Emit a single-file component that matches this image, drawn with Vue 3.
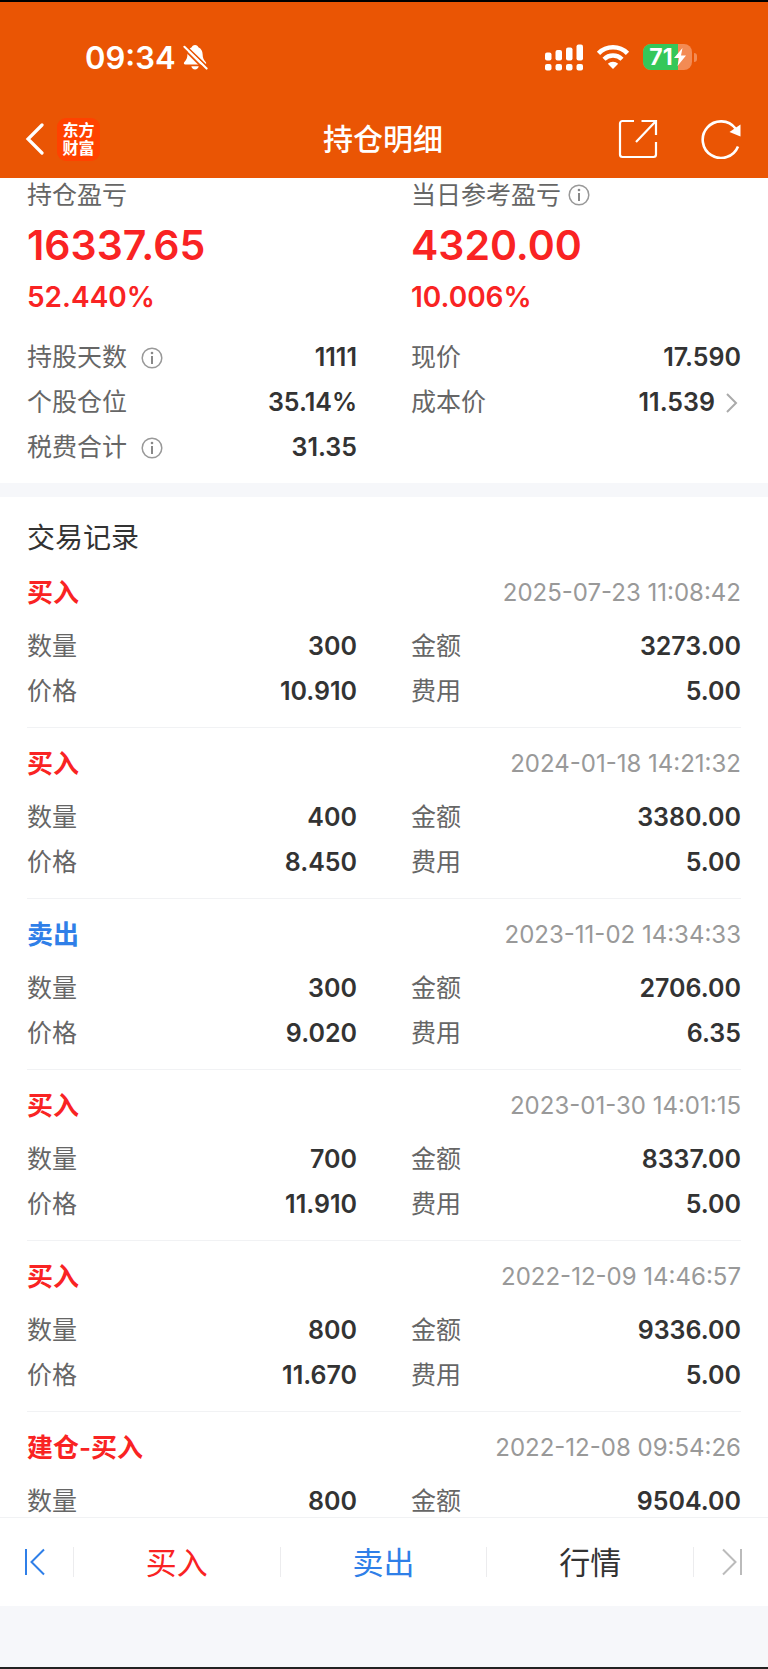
<template>
  <div class="app">
    <header class="header">
      <div class="status-bar">
        <div class="status-left">
          <span class="time">09:34</span>
          <svg class="bell" viewBox="0 0 27 28" width="25" height="26">
            <path fill="#fff" d="M13 1c-2 0-3.300 1.200-3.600 2.500C6 5 5 7.800 4.800 11c-.2 4-.8 5.600-3.300 8.300-1 1.100-.6 2.700 1 2.700h21c1.600 0 2-1.600 1-2.700-2.500-2.700-3.100-4.300-3.300-8.300-.2-3.200-1.200-6-4.600-7.500C16.300 2.200 15 1 13 1zM9 24h8c-.3 2-2 3.500-4 3.500S9.300 26 9 24z" />
            <path d="M0 4.500 24 28.500" stroke="#ea5504" stroke-width="2" />
            <path d="M3 2 28 26" stroke="#ea5504" stroke-width="2" />
            <path d="M1.500 3 25.500 26.500" stroke="#fff" stroke-width="2.200" stroke-linecap="round" />
          </svg>
        </div>
        <div class="status-right">
          <svg viewBox="0 0 38 27" width="38" height="27" fill="#fff">
            <rect x="0" y="8.500" width="6.500" height="8" rx="2" />
            <rect x="10.500" y="6" width="6.500" height="10.500" rx="2" />
            <rect x="21" y="3.500" width="6.500" height="13" rx="2" />
            <rect x="31.500" y="0.500" width="6.500" height="16" rx="2" />
            <rect x="0" y="20" width="6.500" height="6.500" rx="2" />
            <rect x="10.500" y="20" width="6.500" height="6.500" rx="2" />
            <rect x="21" y="20" width="6.500" height="6.500" rx="2" />
            <rect x="31.500" y="20" width="6.500" height="6.500" rx="2" />
          </svg>
          <svg viewBox="0 0 34 26" width="34" height="26">
            <path d="M2.500 9.300a20.500 20.500 0 0 1 29 0" fill="none" stroke="#fff" stroke-width="4.600" />
            <path d="M8 15.200a12.800 12.800 0 0 1 18 0" fill="none" stroke="#fff" stroke-width="4.400" />
            <path d="M17 25l-5.200-5.200a7.400 7.400 0 0 1 10.400 0z" fill="#fff" />
          </svg>
          <div class="battery">
            <div class="battery-body">
              <div class="battery-level" :style="{ width: battery + '%' }"></div>
              <div class="battery-text">
                <span>{{ battery }}</span>
                <svg viewBox="0 0 12 18" width="12" height="18">
                  <path d="M8.500 0 0 10h5L3.500 18 12 7.500H7z" fill="#fff" />
                </svg>
              </div>
            </div>
            <div class="battery-cap"></div>
          </div>
        </div>
      </div>
      <nav class="nav">
        <div class="nav-left">
          <button class="icon-btn" type="button" aria-label="返回">
            <svg viewBox="0 0 20 32" width="20" height="32">
              <path d="M17 2 3 16l14 14" fill="none" stroke="#fff" stroke-width="3.200" stroke-linecap="round" />
            </svg>
          </button>
          <div class="logo"><span>东方</span><span>财富</span></div>
        </div>
        <h1 class="nav-title">持仓明细</h1>
        <div class="nav-right">
          <button class="icon-btn" type="button" aria-label="分享">
            <svg viewBox="0 0 40 40" width="40" height="40" fill="none" stroke="#fff" stroke-width="2.200">
              <path d="M16 2H4.500A2.500 2.500 0 0 0 2 4.500v31A2.500 2.500 0 0 0 4.500 38h31a2.500 2.500 0 0 0 2.500-2.500V23" />
              <path d="M23.500 2H38v14M38 2 18 23" />
            </svg>
          </button>
          <button class="icon-btn" type="button" aria-label="刷新">
            <svg viewBox="0 0 40 40" width="40" height="40">
              <path d="M37 27.500A18.300 18.300 0 1 1 34.500 9.500" fill="none" stroke="#fff" stroke-width="2.600" />
              <path d="M39.500 5.500v12L28.500 13z" fill="#fff" />
            </svg>
          </button>
        </div>
      </nav>
    </header>

    <main class="content">
      <section class="summary">
        <div class="columns">
          <div v-for="item in profits" :key="item.label">
            <div class="label profit-label">
              {{ item.label }}
              <svg v-if="item.info" class="info" viewBox="0 0 22 22" width="22" height="22">
                <circle cx="11" cy="11" r="9.800" fill="none" stroke="#999" stroke-width="1.500" />
                <circle cx="11" cy="6" r="1.300" fill="#888" />
                <path d="M11 9v8" stroke="#888" stroke-width="2" />
              </svg>
            </div>
            <div class="profit-amount">{{ item.amount }}</div>
            <div class="profit-percent">{{ item.percent }}</div>
          </div>
        </div>
        <div class="columns stats">
          <div v-for="(column, i) in stats" :key="i">
            <div v-for="item in column" :key="item.label" class="row">
              <span class="label stat-label">
                {{ item.label }}
                <svg v-if="item.info" class="info" viewBox="0 0 22 22" width="22" height="22">
                  <circle cx="11" cy="11" r="9.800" fill="none" stroke="#999" stroke-width="1.500" />
                  <circle cx="11" cy="6" r="1.300" fill="#888" />
                  <path d="M11 9v8" stroke="#888" stroke-width="2" />
                </svg>
              </span>
              <button v-if="item.link" class="value link" type="button">
                {{ item.value }}
                <svg viewBox="0 0 16 20" width="16" height="20">
                  <path d="M2 1 11 10 2 19" fill="none" stroke="#aaa" stroke-width="2" />
                </svg>
              </button>
              <span v-else class="value">{{ item.value }}</span>
            </div>
          </div>
        </div>
      </section>

      <section class="records">
        <h2 class="records-title">交易记录</h2>
        <article v-for="record in records" :key="record.time" class="record">
          <div class="record-head">
            <h3 class="record-type" :class="record.side">{{ record.type }}</h3>
            <time class="record-time">{{ record.time }}</time>
          </div>
          <div class="columns record-fields">
            <div v-for="field in record.fields" :key="field[0]" class="row">
              <span class="label">{{ field[0] }}</span>
              <span class="value">{{ field[1] }}</span>
            </div>
          </div>
        </article>
      </section>
    </main>

    <footer class="footer">
      <div class="tabs">
        <button class="tab-side" type="button" aria-label="上一个">
          <svg viewBox="0 0 20 28" width="20" height="28" fill="none" stroke="#2f7fe8" stroke-width="2">
            <path d="M1 1v26M19 1.500 6.500 14 19 26.500" />
          </svg>
        </button>
        <button class="tab buy" type="button">买入</button>
        <button class="tab sell" type="button">卖出</button>
        <button class="tab" type="button">行情</button>
        <button class="tab-side tab-next" type="button" aria-label="下一个">
          <svg viewBox="0 0 20 28" width="20" height="28" fill="none" stroke="#bbb" stroke-width="2">
            <path d="M19 1v26M1 1.500 13.500 14 1 26.500" />
          </svg>
        </button>
      </div>
    </footer>
  </div>
</template>

<script setup>
import { ref } from 'vue';

const battery = ref(71);

const profits = ref([
  { label: '持仓盈亏', amount: '16337.65', percent: '52.440%' },
  { label: '当日参考盈亏', amount: '4320.00', percent: '10.006%', info: true }
]);

const stats = ref([
  [
    { label: '持股天数', value: '1111', info: true },
    { label: '个股仓位', value: '35.14%' },
    { label: '税费合计', value: '31.35', info: true }
  ],
  [
    { label: '现价', value: '17.590' },
    { label: '成本价', value: '11.539', link: true }
  ]
]);

const records = ref([
  {
    type: '买入', side: 'buy', time: '2025-07-23 11:08:42',
    fields: [['数量', '300'], ['金额', '3273.00'], ['价格', '10.910'], ['费用', '5.00']]
  },
  {
    type: '买入', side: 'buy', time: '2024-01-18 14:21:32',
    fields: [['数量', '400'], ['金额', '3380.00'], ['价格', '8.450'], ['费用', '5.00']]
  },
  {
    type: '卖出', side: 'sell', time: '2023-11-02 14:34:33',
    fields: [['数量', '300'], ['金额', '2706.00'], ['价格', '9.020'], ['费用', '6.35']]
  },
  {
    type: '买入', side: 'buy', time: '2023-01-30 14:01:15',
    fields: [['数量', '700'], ['金额', '8337.00'], ['价格', '11.910'], ['费用', '5.00']]
  },
  {
    type: '买入', side: 'buy', time: '2022-12-09 14:46:57',
    fields: [['数量', '800'], ['金额', '9336.00'], ['价格', '11.670'], ['费用', '5.00']]
  },
  {
    type: '建仓-买入', side: 'buy', time: '2022-12-08 09:54:26',
    fields: [['数量', '800'], ['金额', '9504.00']]
  }
]);
</script>

<style>
body {
  margin: 0;
  background: #fff;
}
</style>

<style scoped>
.app {
  display: flex;
  flex-direction: column;
  height: 100vh;
  box-sizing: border-box;
  border-top: 2px solid #000;
  border-bottom: 2px solid #222;
  font-family: Inter, "Noto Sans CJK SC", sans-serif;
  line-height: 1;
  color: #333;
}
h1, h2, h3 {
  margin: 0;
  font-weight: 400;
}
button {
  padding: 0;
  border: 0;
  background: none;
  font-family: inherit;
  line-height: inherit;
  color: inherit;
  cursor: pointer;
}
svg {
  display: block;
  flex: none;
}

/* header */
.header {
  flex: none;
  padding-bottom: 12px;
  background: #ea5504;
  color: #fff;
}
.status-bar {
  display: flex;
  align-items: center;
  justify-content: space-between;
  height: 110px;
  padding: 0 71px 0 85px;
}
.status-left {
  display: flex;
  align-items: center;
  gap: 7px;
}
.time {
  font-size: 31px;
  font-weight: 600;
}
.status-right {
  display: flex;
  align-items: center;
  gap: 13px;
}
.battery {
  display: flex;
  align-items: center;
  gap: 2px;
}
.battery-body {
  position: relative;
  width: 49px;
  height: 26px;
  border-radius: 8px;
  overflow: hidden;
  background: #f38b54;
}
.battery-level {
  height: 100%;
  background: #34c759;
}
.battery-text {
  position: absolute;
  inset: 0;
  display: flex;
  align-items: center;
  justify-content: center;
  gap: 1px;
  font-size: 23px;
  font-weight: 700;
}
.battery-cap {
  width: 3px;
  height: 9px;
  border-radius: 0 3px 3px 0;
  background: #f38b54;
}
.nav {
  display: grid;
  grid-template-columns: 1fr auto 1fr;
  align-items: center;
  height: 54px;
  padding: 0 27px 0 25px;
}
.nav-left {
  display: flex;
  align-items: center;
  gap: 12px;
}
.logo {
  display: flex;
  flex-direction: column;
  align-items: center;
  justify-content: center;
  width: 43px;
  height: 43px;
  border-radius: 9px;
  background: #ff4200;
  font-size: 16px;
  font-weight: 700;
  line-height: 18px;
}
.nav-title {
  font-size: 30px;
  font-weight: 500;
}
.nav-right {
  display: flex;
  justify-content: flex-end;
  gap: 43px;
}

/* content */
.content {
  flex: 1;
  min-height: 0;
  overflow: hidden;
}
.columns {
  display: grid;
  grid-template-columns: 1fr 1fr;
  column-gap: 54px;
}
.row {
  display: flex;
  align-items: center;
  justify-content: space-between;
  height: 45px;
}
.label {
  font-size: 25px;
  color: #666;
}
.value {
  font-size: 25px;
  font-weight: 600;
  color: #333;
}
.link {
  display: flex;
  align-items: center;
  gap: 10px;
}
.summary {
  padding: 0 27px 13px;
  border-bottom: 14px solid #f6f7fa;
}
.profit-label {
  display: flex;
  align-items: center;
  gap: 7px;
  height: 34px;
}
.profit-amount {
  font-size: 41px;
  font-weight: 600;
  line-height: 66px;
  color: #f92323;
}
.profit-percent {
  font-size: 28px;
  font-weight: 600;
  line-height: 38px;
  color: #f92323;
}
.stats {
  margin-top: 19px;
}
.stat-label {
  display: flex;
  align-items: center;
  gap: 14px;
}

/* records */
.records {
  padding: 0 27px;
}
.records-title {
  padding-top: 22px;
  font-size: 28px;
  line-height: 38px;
}
.record {
  padding: 12px 0 13px;
  border-bottom: 1px solid #f1f2f4;
}
.record-head {
  display: flex;
  align-items: center;
  justify-content: space-between;
  height: 48px;
}
.record-type {
  font-size: 26px;
  font-weight: 600;
}
.record-time {
  font-size: 24px;
  color: #999;
}
.record-fields {
  margin-top: 7px;
}
.buy {
  color: #f92323;
}
.sell {
  color: #2f7fe8;
}

/* footer */
.footer {
  flex: none;
  padding-bottom: 61px;
  border-top: 1px solid #f1f2f4;
  background: #f6f7fa;
}
.tabs {
  display: flex;
  align-items: center;
  height: 88px;
  background: #fff;
}
.tab-side,
.tab {
  display: flex;
  align-items: center;
  height: 30px;
  border-right: 1px solid #ececee;
}
.tab-side {
  width: 74px;
  padding-left: 25px;
}
.tab {
  flex: 1;
  justify-content: center;
  font-size: 31px;
}
.tab-next {
  justify-content: flex-end;
  padding: 0 26px 0 0;
  border-right: 0;
}
</style>
